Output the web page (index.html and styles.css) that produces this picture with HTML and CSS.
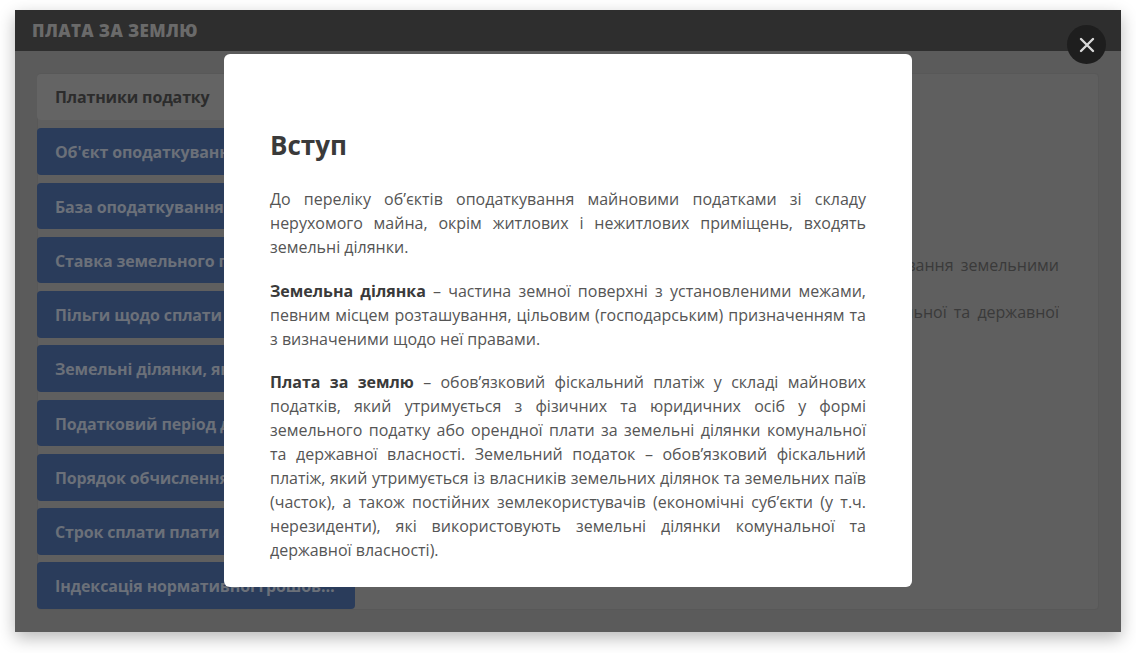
FILE: index.html
```html
<!DOCTYPE html>
<html lang="uk">
<head>
<meta charset="utf-8">
<title>Плата за землю</title>
<link rel="stylesheet" href="styles.css">
</head>
<body>
<div class="window">
  <header class="win-head">ПЛАТА ЗА ЗЕМЛЮ</header>
  <div class="win-body">
    <div class="panel">
      <nav class="side">
        <div class="tab active">Платники податку</div>
        <div class="tab">Об'єкт оподаткування плати за землю</div>
        <div class="tab">База оподаткування плати за землю</div>
        <div class="tab">Ставка земельного податку</div>
        <div class="tab">Пільги щодо сплати земельного податку</div>
        <div class="tab">Земельні ділянки, які не оподатковуються</div>
        <div class="tab">Податковий період для плати за землю</div>
        <div class="tab">Порядок обчислення плати за землю</div>
        <div class="tab">Строк сплати плати за землю</div>
        <div class="tab">Індексація нормативної грошової оцінки</div>
      </nav>
      <section class="content">
        <div class="line l1"><span>Платниками податку є власники земельних ділянок, об'єкти оподаткування земельними</span></div>
        <div class="line l2"><span>ділянками, які перебувають у власності або користуванні, комунальної та державної</span></div>
      </section>
    </div>
  </div>
</div>

<div class="modal">
  <h2 class="modal-title">Вступ</h2>
  <p>До переліку об’єктів оподаткування майновими податками зі складу нерухомого майна, окрім житлових і нежитлових приміщень, входять земельні ділянки.</p>
  <p><b>Земельна ділянка</b> – частина земної поверхні з установленими межами, певним місцем розташування, цільовим (господарським) призначенням та з визначеними щодо неї правами.</p>
  <p><b>Плата за землю</b> – обов’язковий фіскальний платіж у складі майнових податків, який утримується з фізичних та юридичних осіб у формі земельного податку або орендної плати за земельні ділянки комунальної та державної власності. Земельний податок – обов’язковий фіскальний платіж, який утримується із власників земельних ділянок та земельних паїв (часток), а також постійних землекористувачів (економічні суб’єкти (у т.ч. нерезиденти), які використовують земельні ділянки комунальної та державної власності).</p>
</div>

<button class="close" aria-label="Закрити">
  <svg width="16" height="16" viewBox="0 0 16 16"><path d="M2 2 L14 14 M14 2 L2 14" stroke="#d9d9d9" stroke-width="2.4" stroke-linecap="round"/></svg>
</button>
</body>
</html>
```

FILE: styles.css
```css
* { box-sizing: border-box; }
html, body { margin: 0; padding: 0; }
body {
  background: #ffffff;
  font-family: "Open Sans", "Noto Sans", sans-serif;
  width: 1136px;
  height: 653px;
  overflow: hidden;
  position: relative;
}
.window {
  margin: 10px 15px 0;
  width: 1106px;
  height: 622px;
  background: #5b5b5b;
  box-shadow: 0 6px 16px rgba(0,0,0,0.28);
  display: flex;
  flex-direction: column;
}
.win-head {
  height: 41px;
  background: #2e2e2e;
  color: #6a6a6a;
  font-weight: 800;
  font-size: 17px;
  line-height: 42px;
  padding-left: 17px;
  letter-spacing: 0.35px;
}
.win-body {
  flex: 1;
  padding: 22px;
}
.panel {
  height: 537px;
  background: #5f5f5f;
  border: 1px solid #585858;
  border-radius: 4px;
  display: flex;
}
.side {
  width: 318px;
  margin-left: -1px;
  display: flex;
  flex-direction: column;
  gap: 7.6px;
}
.tab {
  height: 47px;
  line-height: 48px;
  padding: 0 18px;
  background: #2a3c5b;
  color: #6b7079;
  font-weight: 700;
  font-size: 16px;
  letter-spacing: -0.15px;
  border-radius: 4px;
  white-space: nowrap;
  overflow: hidden;
  text-overflow: ellipsis;
}
.tab.active {
  height: 46px;
  line-height: 47px;
  background: #646464;
  color: #2c2c2c;
  margin-bottom: 1px;
}
.content {
  flex: 1;
  min-width: 0;
  padding: 179px 39px 0 20px;
  color: #3a3a3a;
  font-size: 16px;
}
.line {
  display: flex;
  justify-content: flex-end;
  overflow: hidden;
  white-space: nowrap;
  line-height: 24px;
  word-spacing: 3px;
}
.line span { flex: none; }
.l2 { margin-top: 23px; }

.modal {
  position: absolute;
  left: 224px;
  top: 54px;
  width: 688px;
  height: 533px;
  background: #ffffff;
  border-radius: 6px;
  padding: 0 46px;
}
.modal-title {
  margin: 76px 0 26px;
  font-size: 26px;
  line-height: 31px;
  font-weight: 700;
  color: #3a3a3a;
}
.modal p {
  margin: 0 0 19.5px;
  font-size: 16px;
  line-height: 24px;
  color: #555555;
  text-align: justify;
}
.modal p b { color: #3a3a3a; }
.close {
  position: absolute;
  left: 1067px;
  top: 25px;
  width: 39px;
  height: 39px;
  border-radius: 50%;
  border: none;
  background: #1e1e1e;
  padding: 0;
  display: flex;
  align-items: center;
  justify-content: center;
}
```
